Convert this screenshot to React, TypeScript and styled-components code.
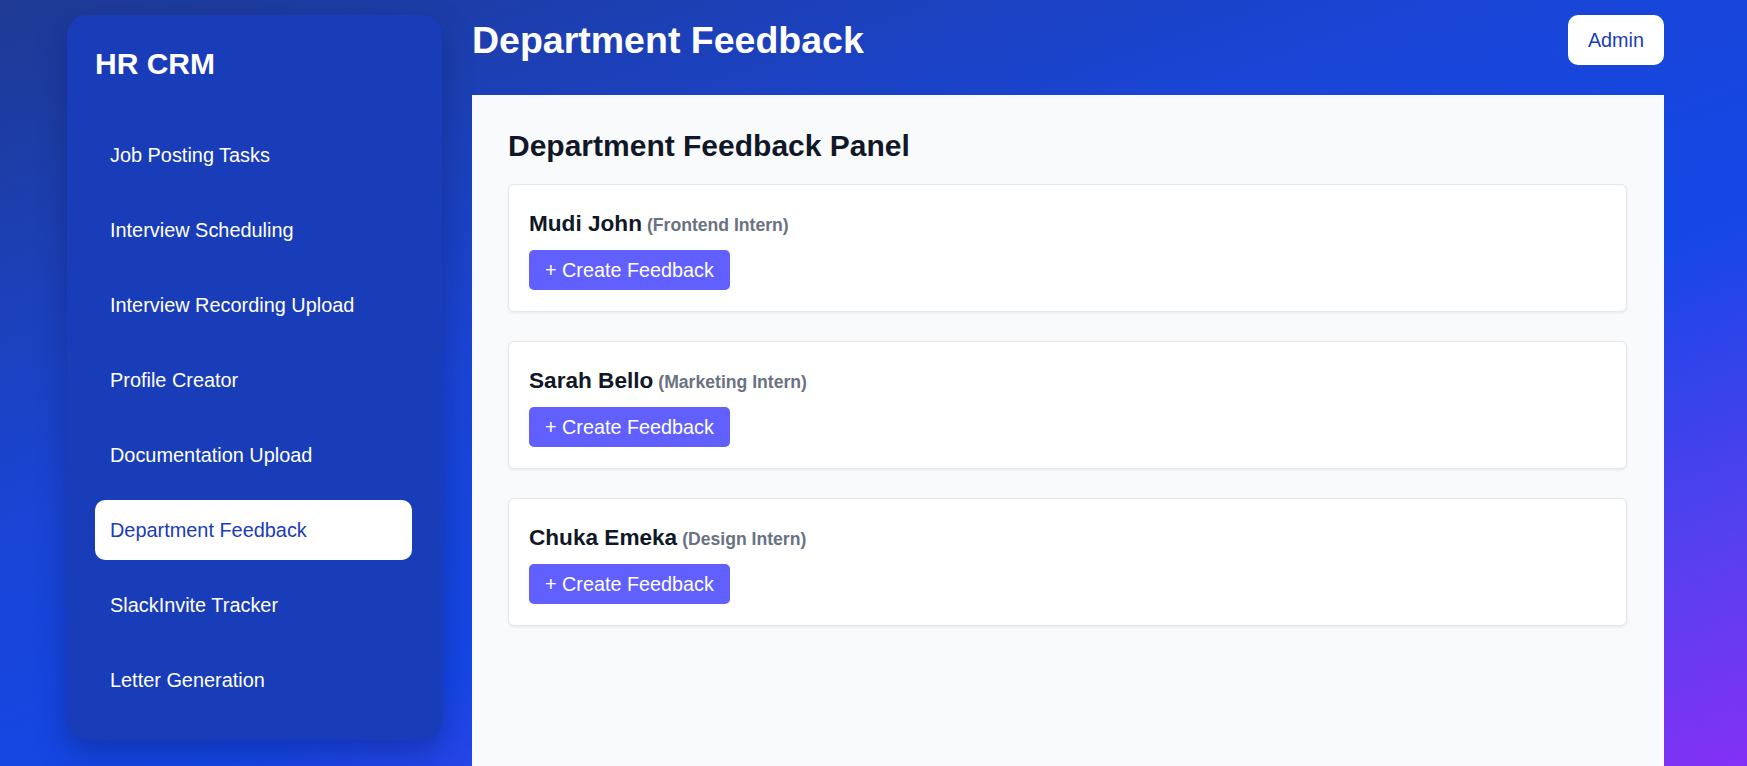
import { createGlobalStyle } from "styled-components";
import styled from "styled-components";

const pal = {
	navy: "#1c3a96",
	side: "#193cb8",
	ink: "#101828",
	muted: "#6a7282",
	panel: "#f9fafb",
	line: "#e5e7eb",
	accent: "#625fff",
};

const GlobalStyle = createGlobalStyle`
	* { box-sizing: border-box; }
	html, body { margin: 0; padding: 0; }
	body {
		font-family: "Liberation Sans", Arial, sans-serif;
		background: ${pal.navy};
	}
`;

const Page = styled.div`
	height: 100vh;
	display: flex;
	align-items: flex-start;
	gap: 30px;
	padding: 15px 83px 0 67px;
	background: linear-gradient(
		160deg,
		#1e3a94 0%,
		#1a45d6 38%,
		#1447e6 60%,
		#5b3ff0 85%,
		#8330f5 100%
	);
	overflow: hidden;
`;

const Sidebar = styled.aside`
	width: 375px;
	flex-shrink: 0;
	background: ${pal.side};
	border-radius: 20px;
	padding: 30px 30px 30px 28px;
	box-shadow: 0 12px 30px rgba(10, 20, 80, 0.35);
	display: flex;
	flex-direction: column;
`;

const Brand = styled.h2`
	margin: 2px 0 44px;
	color: #fff;
	font-size: 30px;
	line-height: 34px;
	font-weight: 700;
`;

const NavList = styled.nav`
	display: flex;
	flex-direction: column;
	gap: 15px;
`;

const NavItem = styled.div<{ $active?: boolean }>`
	height: 60px;
	display: flex;
	align-items: center;
	padding: 0 15px;
	border-radius: 10px;
	font-size: 19.9px;
	background: ${(p) => (p.$active ? "#fff" : "transparent")};
	color: ${(p) => (p.$active ? pal.side : "#fff")};
`;

const Main = styled.main`
	flex: 1;
	align-self: stretch;
	display: flex;
	flex-direction: column;
	gap: 30px;
`;

const Header = styled.header`
	height: 50px;
	display: flex;
	align-items: center;
	justify-content: space-between;
`;

const Title = styled.h1`
	margin: 0;
	color: #fff;
	font-size: 37.5px;
	font-weight: 700;
`;

const AdminButton = styled.button`
	height: 50px;
	padding: 0 20px;
	border: none;
	border-radius: 10px;
	background: #fff;
	color: ${pal.side};
	font-family: inherit;
	font-size: 19.8px;
`;

const Panel = styled.section`
	flex: 1;
	background: ${pal.panel};
	padding: 34px 37px 36px 36px;
	display: flex;
	flex-direction: column;
`;

const PanelTitle = styled.h2`
	margin: 0 0 21px;
	color: ${pal.ink};
	font-size: 30px;
	line-height: 34px;
	font-weight: 700;
`;

const CardList = styled.div`
	display: flex;
	flex-direction: column;
	gap: 29px;
`;

const Card = styled.div`
	background: #fff;
	border: 1px solid ${pal.line};
	border-radius: 6px;
	box-shadow: 0 1px 3px rgba(0, 0, 0, 0.08);
	padding: 24px 20px 21px;
	display: flex;
	flex-direction: column;
	align-items: flex-start;
	gap: 10px;
`;

const Name = styled.div`
	color: ${pal.ink};
	font-size: 22.6px;
	line-height: 30px;
	font-weight: 700;
`;

const Role = styled.span`
	color: ${pal.muted};
	font-size: 17.6px;
	font-weight: 700;
	margin-left: 5px;
`;

const CreateButton = styled.button`
	height: 40px;
	padding: 0 16px;
	border: none;
	border-radius: 5px;
	background: ${pal.accent};
	color: #fff;
	font-family: inherit;
	font-size: 19.8px;
`;

const navItems = [
	"Job Posting Tasks",
	"Interview Scheduling",
	"Interview Recording Upload",
	"Profile Creator",
	"Documentation Upload",
	"Department Feedback",
	"SlackInvite Tracker",
	"Letter Generation",
];

const interns = [
	{ name: "Mudi John", role: "Frontend Intern" },
	{ name: "Sarah Bello", role: "Marketing Intern" },
	{ name: "Chuka Emeka", role: "Design Intern" },
];

export default function App() {
	return (
		<>
			<GlobalStyle />
			<Page>
				<Sidebar>
					<Brand>HR CRM</Brand>
					<NavList>
						{navItems.map((item) => (
							<NavItem key={item} $active={item === "Department Feedback"}>
								{item}
							</NavItem>
						))}
					</NavList>
				</Sidebar>
				<Main>
					<Header>
						<Title>Department Feedback</Title>
						<AdminButton>Admin</AdminButton>
					</Header>
					<Panel>
						<PanelTitle>Department Feedback Panel</PanelTitle>
						<CardList>
							{interns.map((intern) => (
								<Card key={intern.name}>
									<Name>
										{intern.name}
										<Role>({intern.role})</Role>
									</Name>
									<CreateButton>+ Create Feedback</CreateButton>
								</Card>
							))}
						</CardList>
					</Panel>
				</Main>
			</Page>
		</>
	);
}
